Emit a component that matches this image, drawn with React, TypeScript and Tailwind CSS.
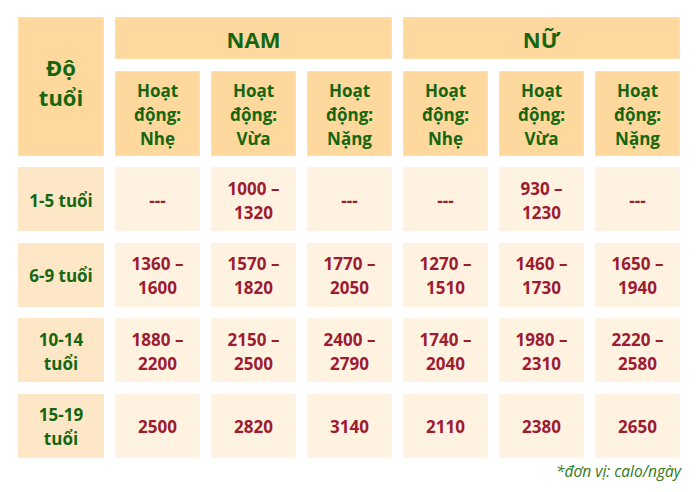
import React from "react";

const H = "bg-[#fed89d] border border-[#fde0b0] flex items-center justify-center text-center text-[#146610] font-bold";
const green = "text-[#146610]";
const red = "text-[#9c1c31]";

const rows: { age: string[]; vals: string[][] }[] = [
  { age: ["1-5 tuổi"], vals: [["---"], ["1000 –", "1320"], ["---"], ["---"], ["930 –", "1230"], ["---"]] },
  { age: ["6-9 tuổi"], vals: [["1360 –", "1600"], ["1570 –", "1820"], ["1770 –", "2050"], ["1270 –", "1510"], ["1460 –", "1730"], ["1650 –", "1940"]] },
  { age: ["10-14", "tuổi"], vals: [["1880 –", "2200"], ["2150 –", "2500"], ["2400 –", "2790"], ["1740 –", "2040"], ["1980 –", "2310"], ["2220 –", "2580"]] },
  { age: ["15-19", "tuổi"], vals: [["2500"], ["2820"], ["3140"], ["2110"], ["2380"], ["2650"]] },
];

const subs = ["Nhẹ", "Vừa", "Nặng", "Nhẹ", "Vừa", "Nặng"];

export default function App() {
  return (
    <div className="w-[700px] h-[492px] bg-white pt-[17px] pl-[18px]" style={{ fontFamily: '"Open Sans", sans-serif' }}>
      <div className="grid grid-cols-[86px_repeat(6,85px)] grid-rows-[42px_85px_64px_64px_64px_64px] gap-x-[11px] gap-y-[11.5px] w-[663px]">
        <div className={`${H} row-span-2 text-[22px] leading-[30px] pb-[9px]`}>
          <div>Độ<br />tuổi</div>
        </div>
        <div className={`${H} col-span-3 text-[22px] pt-[2px]`}>NAM</div>
        <div className={`${H} col-span-3 text-[22px] pt-[2px]`}>NỮ</div>
        {subs.map((s, i) => (
          <div key={i} className={`${H} text-[17px] leading-[24px] pt-[4px]`}>
            <div>Hoạt<br />động:<br />{s}</div>
          </div>
        ))}
        {rows.map((r, ri) => (
          <React.Fragment key={ri}>
            <div className={`bg-[#fee7c7] flex items-center justify-center text-center font-bold text-[17px] leading-[24px] pt-[3px] ${green}`}>
              <div>{r.age.map((a, k) => (<div key={k}>{a}</div>))}</div>
            </div>
            {r.vals.map((v, vi) => (
              <div key={vi} className={`bg-[#fff2e0] flex items-center justify-center text-center font-bold text-[17px] leading-[24px] pt-[3px] ${red}`}>
                <div>{v.map((a, k) => (<div key={k}>{a}</div>))}</div>
              </div>
            ))}
          </React.Fragment>
        ))}
      </div>
      <div className="w-[663px] text-right italic text-[15.5px] leading-[20px] mt-[3px] text-[#2f7a22]">*đơn vị: calo/ngày</div>
    </div>
  );
}
